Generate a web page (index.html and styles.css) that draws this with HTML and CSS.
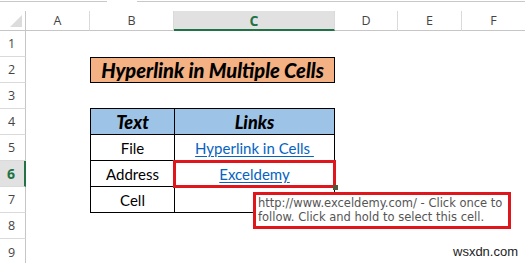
FILE: index.html
```html
<!DOCTYPE html>
<html>
<head>
<meta charset="utf-8">
<link rel="stylesheet" href="styles.css">
</head>
<body>
<div class="topbar"><span class="seg seg1"></span><span class="seg seg2"></span></div>
<div class="sheet">
  <div class="corner"><span class="tri"></span></div>
  <div class="colhead">A</div>
  <div class="colhead">B</div>
  <div class="colhead active">C</div>
  <div class="colhead">D</div>
  <div class="colhead">E</div>
  <div class="colhead last">F</div>

  <div class="rowhead r1">1</div>
  <div class="rowhead r2">2</div>
  <div class="rowhead r3">3</div>
  <div class="rowhead r4">4</div>
  <div class="rowhead r5">5</div>
  <div class="rowhead r6 active">6</div>
  <div class="rowhead r7">7</div>
  <div class="rowhead r8">8</div>
  <div class="rowhead r9">9</div>

  <div class="title">Hyperlink in Multiple Cells</div>

  <table class="data">
    <tr class="hdr"><th class="cb">Text</th><th class="cc">Links</th></tr>
    <tr><td>File</td><td><a class="link">Hyperlink in Cells&nbsp;</a></td></tr>
    <tr><td>Address</td><td class="sel"><a class="link">Exceldemy</a><span class="handle"></span></td></tr>
    <tr><td>Cell</td><td></td></tr>
  </table>

  <div class="tooltip">http://www.exceldemy.com/ - Click once to<br>follow. Click and hold to select this cell.</div>
  <div class="watermark">wsxdn.com</div>
</div>
</body>
</html>
```

FILE: styles.css
```css
* { box-sizing: border-box; }
html, body { margin: 0; padding: 0; background: #fff; }
body { width: 525px; height: 263px; overflow: hidden; font-family: "Lato", "Liberation Sans", sans-serif; }

.topbar { height: 11px; position: relative; display: flex; }
.seg { display: block; height: 1px; background: #c8c8c8; margin-top: 1px; }
.seg1 { width: 107px; }
.seg2 { width: 388px; margin-left: 30px; }

.sheet {
  position: relative;
  display: grid;
  grid-template-columns: 26px 64px 84px 161px 63px 64px 63px;
  grid-template-rows: 20px repeat(9, 26px);
}

.corner { grid-column: 1; grid-row: 1; border-right: 1px solid #c6c6c6; border-bottom: 1px solid #c6c6c6; position: relative; }
.tri { position: absolute; right: 3px; bottom: 3px; width: 0; height: 0; border-left: 12px solid transparent; border-bottom: 12px solid #dcdcdc; }

.colhead {
  grid-row: 1;
  display: flex; align-items: center; justify-content: center;
  font-family: "Open Sans", "Noto Sans", sans-serif; font-size: 12.5px; color: #444;
  border-right: 1px solid #dadada; border-bottom: 1px solid #c6c6c6;
}
.colhead.last { border-right: none; }
.colhead.active { background: #e1e1e1; color: #217346; font-weight: bold; border-bottom: 2px solid #217346; font-size: 14px; }

.rowhead {
  grid-column: 1;
  display: flex; align-items: center; justify-content: center;
  font-family: "Open Sans", "Noto Sans", sans-serif; font-size: 12.5px; color: #444;
  border-right: 1px solid #c6c6c6; border-bottom: 1px solid #dadada;
  padding-right: 2px;
}
.r1 { grid-row: 2; } .r2 { grid-row: 3; } .r3 { grid-row: 4; } .r4 { grid-row: 5; } .r5 { grid-row: 6; }
.r6 { grid-row: 7; } .r7 { grid-row: 8; } .r8 { grid-row: 9; } .r9 { grid-row: 10; border-bottom: none; }
.rowhead.active { background: #e1e1e1; color: #217346; font-weight: bold; border-right: 2px solid #217346; font-size: 14px; }

.title {
  grid-column: 3 / 5; grid-row: 3;
  height: 26px;
  background: #f4b183; border: 1px solid #000;
  display: flex; align-items: center; justify-content: center;
  font-weight: 900; font-style: italic; font-size: 20px; color: #000;
}

.data {
  grid-column: 3 / 5; grid-row: 5 / 9;
  margin-top: -1px;
  border-collapse: collapse;
  width: 245px; height: 105px;
  font-size: 15px; color: #000;
}
.data th, .data td { border: 1px solid #000; text-align: center; padding: 0; height: 26px; }
.data th.cb, .data td:first-child { width: 84px; }
.hdr th { background: #9dc3e6; font-weight: 900; font-style: italic; font-size: 18px; }
.link { color: #0563c1; text-decoration: underline; text-underline-offset: 2px; }

.sel { position: relative; }
.sel::after {
  content: ""; position: absolute; left: -2px; top: -1px; right: -2px; bottom: -2px;
  border: 3px solid #e0161d;
}
.handle { position: absolute; right: -4px; bottom: -4px; width: 5px; height: 5px; background: #4a5a3a; z-index: 2; }

.tooltip {
  position: absolute; left: 253px; top: 181px; width: 258px; height: 37px;
  border: 3px solid #e0161d; background: #fff;
  font-family: "DejaVu Sans", sans-serif; font-size: 11.5px; line-height: 14px; color: #555;
  padding: 1px 0 0 2px; white-space: nowrap; overflow: hidden;
}
.watermark {
  position: absolute; left: 453px; top: 233px;
  font-family: "Liberation Sans", sans-serif; font-size: 13px; color: #222;
}
```
